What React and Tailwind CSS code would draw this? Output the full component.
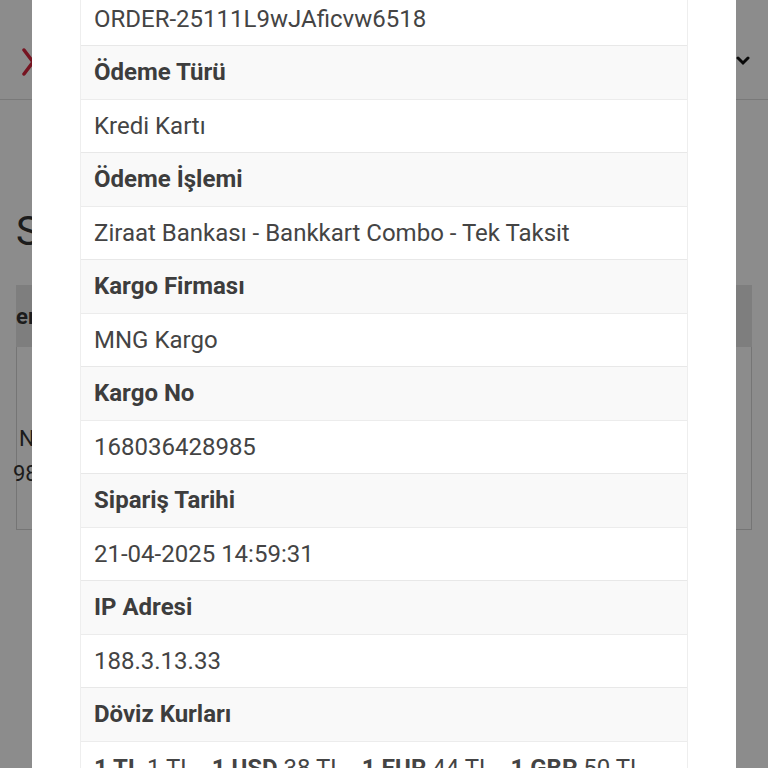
import React from 'react';

const rows = [
  { label: null, value: 'ORDER-25111L9wJAficvw6518' },
  { label: 'Ödeme Türü', value: 'Kredi Kartı' },
  { label: 'Ödeme İşlemi', value: 'Ziraat Bankası - Bankkart Combo - Tek Taksit' },
  { label: 'Kargo Firması', value: 'MNG Kargo' },
  { label: 'Kargo No', value: '168036428985' },
  { label: 'Sipariş Tarihi', value: '21-04-2025 14:59:31' },
  { label: 'IP Adresi', value: '188.3.13.33' },
  { label: 'Döviz Kurları', value: 'rates' },
];

const Rates = () => (
  <span className="whitespace-nowrap">
    <b>1 TL</b> 1 TL - <b>1 USD</b> 38 TL - <b>1 EUR</b> 44 TL - <b>1 GBP</b> 50 TL
  </span>
);

const App = () => {
  return (
    <div className="relative w-[768px] h-[768px] overflow-hidden bg-white font-['Roboto',sans-serif] text-[#333]">
      {/* page underneath */}
      <div className="h-[100px] border-b border-[#dcdcdc] flex items-center justify-between pl-[22px] pr-[18px]">
        <svg width="14" height="30" viewBox="0 0 14 30" className="mt-[24px]">
          <path d="M2 3 L11 15 L2 27" fill="none" stroke="#d7263d" strokeWidth="3.5" strokeLinecap="round" />
        </svg>
        <svg width="14" height="10" viewBox="0 0 14 10" className="mt-[22px]">
          <path d="M2 2 L7 7 L12 2" fill="none" stroke="#111" strokeWidth="3" strokeLinecap="round" />
        </svg>
      </div>
      <div className="px-[16px]">
        <div className="mt-[112px] text-[40px] leading-none">S</div>
        <div className="mt-[33px] h-[62px] bg-[#e6e6e6] flex items-center text-[22px] font-bold">
          er
        </div>
        <div className="h-[183px] border border-t-0 border-[#d6d6d6] pt-[74px] pl-[2px] text-[22px] leading-[35px]">
          <div>N</div>
          <div className="ml-[-6px]">98</div>
        </div>
      </div>
      <div className="absolute inset-0 bg-black/45" />

      {/* modal */}
      <div className="absolute top-0 left-[32px] w-[704px] h-full bg-white px-[48px]">
        <div className="mt-[-8.5px] border-x border-[#eeeeee] text-[24px] text-[#444]">
          {rows.map((r, i) => (
            <React.Fragment key={i}>
              {r.label && (
                <div className="h-[53.5px] flex items-center px-[13px] bg-[#f9f9f9] border-t border-[#e8e8e8] font-bold text-[#3d3d3d]">
                  {r.label}
                </div>
              )}
              <div className="h-[53.5px] flex items-center px-[13px] bg-white border-t border-[#ececec]">
                {r.value === 'rates' ? <Rates /> : r.value}
              </div>
            </React.Fragment>
          ))}
        </div>
      </div>
    </div>
  );
};

export default App;
